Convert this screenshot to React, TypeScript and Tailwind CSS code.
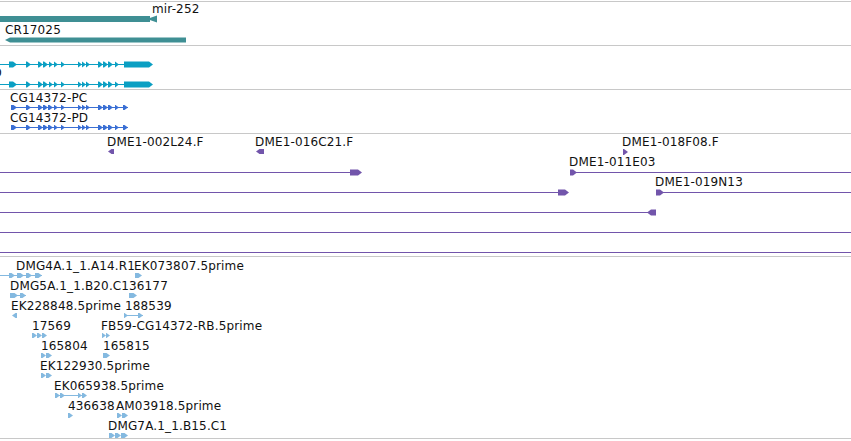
import type { ReactNode } from 'react';

const TEAL = '#3f8f94';
const CYAN = '#0b9fc3';
const BLUE = '#3a6fd4';
const PURPLE = '#7255ab';
const LIGHT = '#84b9e0';

type Label = { text: string; x: number; y: number; right?: boolean };
type Shape = { kind: 'r' | 'l' | 'line' | 'bar'; x1: number; x2: number; y: number; h?: number };

// right-pointing exon / feature glyph
function arrowRight(x1: number, x2: number, cy: number, h: number) {
  const t = Math.min(h / 2 + 1, x2 - x1);
  const top = cy - h / 2;
  const bot = cy + h / 2;
  return `${x1},${top} ${x2 - t},${top} ${x2},${cy} ${x2 - t},${bot} ${x1},${bot}`;
}

function arrowLeft(x1: number, x2: number, cy: number, h: number) {
  const t = Math.min(h / 2 + 1, x2 - x1);
  const top = cy - h / 2;
  const bot = cy + h / 2;
  return `${x2},${top} ${x1 + t},${top} ${x1},${cy} ${x1 + t},${bot} ${x2},${bot}`;
}

function Shapes({ shapes, color, h }: { shapes: Shape[]; color: string; h: number }) {
  return (
    <>
      {shapes.map((s, i) => {
        const hh = s.h ?? h;
        if (s.kind === 'line') {
          return <rect key={i} x={s.x1} y={s.y - 0.5} width={s.x2 - s.x1} height={1} fill={color} />;
        }
        if (s.kind === 'bar') {
          return <rect key={i} x={s.x1} y={s.y - hh / 2} width={s.x2 - s.x1} height={hh} fill={color} />;
        }
        const pts = s.kind === 'r' ? arrowRight(s.x1, s.x2, s.y, hh) : arrowLeft(s.x1, s.x2, s.y, hh);
        return <polygon key={i} points={pts} fill={color} />;
      })}
    </>
  );
}

function Track({
  top,
  className,
  labels,
  children,
}: {
  top: number;
  className: string;
  labels: Label[];
  children: ReactNode;
}) {
  return (
    <div className={`relative overflow-hidden border-b border-[#c8c8c8] ${className}`}>
      <svg className="absolute left-0 top-0" width={851} height={190}>
        <g transform={`translate(0,${-top})`}>{children}</g>
      </svg>
      {labels.map((l, i) => (
        <span
          key={i}
          className="absolute whitespace-nowrap font-['DejaVu_Sans',sans-serif] text-[12px] leading-[12px] tracking-[0.15px] text-[#111]"
          style={l.right ? { right: 851 - l.x, top: l.y - top } : { left: l.x, top: l.y - top }}
        >
          {l.text}
        </span>
      ))}
    </div>
  );
}

// exon layout shared by the CG14372 transcripts
const exonsCyan: [number, number][] = [
  [9, 17], [26, 31], [38, 43], [43, 48], [49, 53], [54, 58], [61, 65],
  [78, 82], [82, 86], [86, 90], [98, 103], [103, 108], [108, 113], [115, 119],
];
const exonsBlue: [number, number][] = [
  [11, 17], [26, 31], [38, 43], [43, 48], [48, 53], [54, 58], [61, 65],
  [78, 82], [82, 86], [86, 90], [98, 103], [103, 108], [108, 113], [115, 119], [123, 128],
];

function transcript(exons: [number, number][], y: number, from: number, to: number): Shape[] {
  return [{ kind: 'line', x1: from, x2: to, y }, ...exons.map(([a, b]) => ({ kind: 'r' as const, x1: a, x2: b, y }))];
}

const cyanShapes: Shape[] = [
  ...transcript(exonsCyan, 64.5, 0, 150),
  { kind: 'r', x1: 124, x2: 153, y: 64.5 },
  ...transcript(exonsCyan, 84.5, 0, 150),
  { kind: 'r', x1: 124, x2: 153, y: 84.5 },
];

const blueShapes: Shape[] = [...transcript(exonsBlue, 107.5, 11, 128), ...transcript(exonsBlue, 127.5, 11, 128)];

const purpleShapes: Shape[] = [
  { kind: 'l', x1: 108, x2: 114, y: 151.5, h: 5 },
  { kind: 'l', x1: 256, x2: 264, y: 151.5, h: 5 },
  { kind: 'r', x1: 623, x2: 628, y: 152, h: 6 },
  { kind: 'line', x1: 0, x2: 352, y: 172.5 },
  { kind: 'r', x1: 350, x2: 362, y: 172.5 },
  { kind: 'r', x1: 570, x2: 577, y: 172.5 },
  { kind: 'line', x1: 570, x2: 851, y: 172.5 },
  { kind: 'line', x1: 0, x2: 560, y: 192.5 },
  { kind: 'r', x1: 558, x2: 569, y: 192.5 },
  { kind: 'r', x1: 656, x2: 664, y: 192.5 },
  { kind: 'line', x1: 656, x2: 851, y: 192.5 },
  { kind: 'line', x1: 0, x2: 652, y: 212.5 },
  { kind: 'l', x1: 647, x2: 656, y: 212.5 },
  { kind: 'line', x1: 0, x2: 851, y: 232.5 },
  { kind: 'line', x1: 0, x2: 851, y: 252.5 },
];

const row = (k: number) => 275.5 + 20 * k;
const lightShapes: Shape[] = [
  { kind: 'line', x1: 0, x2: 42, y: row(0) },
  { kind: 'r', x1: 9, x2: 15, y: row(0) },
  { kind: 'r', x1: 17, x2: 24, y: row(0) },
  { kind: 'r', x1: 26, x2: 32, y: row(0) },
  { kind: 'r', x1: 35, x2: 42, y: row(0) },
  { kind: 'r', x1: 135, x2: 142, y: row(0) },
  { kind: 'line', x1: 10, x2: 26, y: row(1) },
  { kind: 'r', x1: 10, x2: 18, y: row(1) },
  { kind: 'r', x1: 20, x2: 26, y: row(1) },
  { kind: 'r', x1: 129, x2: 137, y: row(1) },
  { kind: 'l', x1: 12, x2: 17, y: row(2) },
  { kind: 'line', x1: 124, x2: 143, y: row(2) },
  { kind: 'r', x1: 124, x2: 128, y: row(2) },
  { kind: 'r', x1: 138, x2: 143, y: row(2) },
  { kind: 'r', x1: 32, x2: 37, y: row(3) },
  { kind: 'r', x1: 37, x2: 42, y: row(3) },
  { kind: 'r', x1: 42, x2: 47, y: row(3) },
  { kind: 'r', x1: 102, x2: 106, y: row(3) },
  { kind: 'r', x1: 106, x2: 110, y: row(3) },
  { kind: 'r', x1: 41, x2: 46, y: row(4) },
  { kind: 'r', x1: 46, x2: 52, y: row(4) },
  { kind: 'r', x1: 103, x2: 110, y: row(4) },
  { kind: 'r', x1: 41, x2: 46, y: row(5) },
  { kind: 'r', x1: 46, x2: 52, y: row(5) },
  { kind: 'line', x1: 55, x2: 86, y: row(6) },
  { kind: 'r', x1: 55, x2: 60, y: row(6) },
  { kind: 'r', x1: 60, x2: 65, y: row(6) },
  { kind: 'r', x1: 78, x2: 82, y: row(6) },
  { kind: 'r', x1: 82, x2: 87, y: row(6) },
  { kind: 'r', x1: 68, x2: 73, y: row(7) },
  { kind: 'r', x1: 117, x2: 122, y: row(7) },
  { kind: 'r', x1: 122, x2: 128, y: row(7) },
  { kind: 'r', x1: 109, x2: 115, y: row(8) },
  { kind: 'r', x1: 115, x2: 121, y: row(8) },
  { kind: 'r', x1: 121, x2: 128, y: row(8) },
];

const lab = (k: number) => 260 + 20 * k;
const lightLabels: Label[] = [
  { text: 'DMG4A.1_1.A14.R1', x: 16, y: lab(0) },
  { text: 'EK073807.5prime', x: 134, y: lab(0) },
  { text: 'DMG5A.1_1.B20.C1', x: 10, y: lab(1) },
  { text: '36177', x: 129, y: lab(1) },
  { text: 'EK228848.5prime', x: 11, y: lab(2) },
  { text: '188539', x: 125, y: lab(2) },
  { text: '17569', x: 32, y: lab(3) },
  { text: 'FB59-CG14372-RB.5prime', x: 101, y: lab(3) },
  { text: '165804', x: 41, y: lab(4) },
  { text: '165815', x: 103, y: lab(4) },
  { text: 'EK122930.5prime', x: 40, y: lab(5) },
  { text: 'EK065938.5prime', x: 54, y: lab(6) },
  { text: '436638', x: 68, y: lab(7) },
  { text: 'AM03918.5prime', x: 116, y: lab(7) },
  { text: 'DMG7A.1_1.B15.C1', x: 108, y: lab(8) },
];

export default function App() {
  return (
    <div className="h-[441px] w-[851px] overflow-hidden bg-white pt-px">
      <div className="border-t border-[#c8c8c8]">
        <Track
          top={2}
          className="h-[44px]"
          labels={[
            { text: 'mir-252', x: 152, y: 3 },
            { text: 'CR17025', x: 5, y: 23.5 },
          ]}
        >
          <rect x={0} y={16} width={150} height={6} fill={TEAL} />
          <polygon points="147,19 157,15.5 157,22.5" fill={TEAL} />
          <polygon points="5,40 10,37.5 186,37.5 186,42.5 10,42.5" fill={TEAL} />
        </Track>

        <Track top={46} className="h-[44px]" labels={[{ text: 'CG14372-RD', x: 2, y: 66.5, right: true }]}>
          <Shapes shapes={cyanShapes} color={CYAN} h={6} />
        </Track>

        <Track
          top={90}
          className="h-[44px]"
          labels={[
            { text: 'CG14372-PC', x: 10, y: 92 },
            { text: 'CG14372-PD', x: 10, y: 112 },
          ]}
        >
          <Shapes shapes={blueShapes} color={BLUE} h={5} />
        </Track>

        <Track
          top={134}
          className="h-[123px]"
          labels={[
            { text: 'DME1-002L24.F', x: 107, y: 135.5 },
            { text: 'DME1-016C21.F', x: 255, y: 135.5 },
            { text: 'DME1-018F08.F', x: 622, y: 136 },
            { text: 'DME1-011E03', x: 569, y: 156 },
            { text: 'DME1-019N13', x: 655, y: 176 },
          ]}
        >
          <Shapes shapes={purpleShapes} color={PURPLE} h={6} />
        </Track>

        <Track top={257} className="h-[182px]" labels={lightLabels}>
          <Shapes shapes={lightShapes} color={LIGHT} h={5} />
        </Track>
      </div>
    </div>
  );
}
